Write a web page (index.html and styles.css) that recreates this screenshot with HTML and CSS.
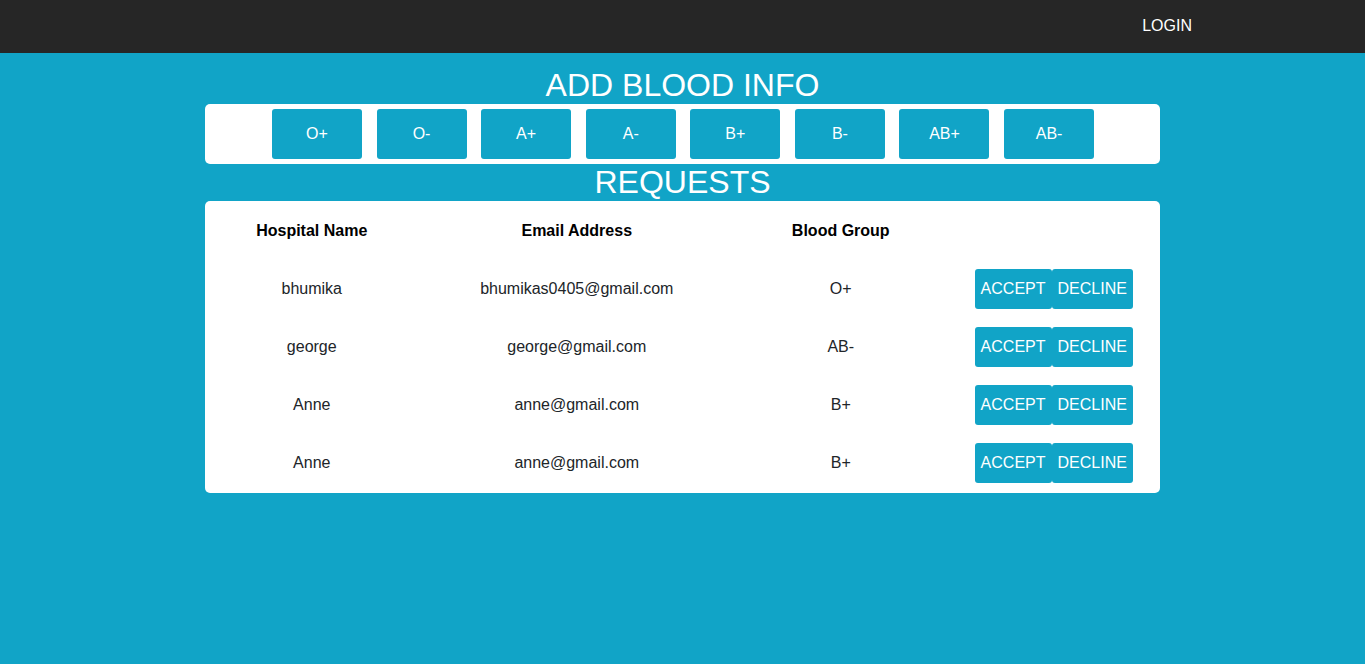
FILE: index.html
```html
<!DOCTYPE html>
<html>
<head>
<meta charset="utf-8">
<title>Blood Bank</title>
<link rel="stylesheet" href="styles.css">
</head>
<body>
<header class="nav">
  <a class="nav-link" href="#">LOGIN</a>
</header>
<main class="main">
  <h1 class="title title-first">ADD BLOOD INFO</h1>
  <section class="panel groups">
    <button class="group-btn">O+</button>
    <button class="group-btn">O-</button>
    <button class="group-btn">A+</button>
    <button class="group-btn">A-</button>
    <button class="group-btn">B+</button>
    <button class="group-btn">B-</button>
    <button class="group-btn">AB+</button>
    <button class="group-btn">AB-</button>
  </section>
  <h1 class="title">REQUESTS</h1>
  <section class="panel requests">
    <div class="row head">
      <div class="cell">Hospital Name</div>
      <div class="cell">Email Address</div>
      <div class="cell">Blood Group</div>
      <div class="cell"></div>
    </div>
    <div class="row">
      <div class="cell">bhumika</div>
      <div class="cell">bhumikas0405@gmail.com</div>
      <div class="cell">O+</div>
      <div class="cell actions"><button class="act">ACCEPT</button><button class="act">DECLINE</button></div>
    </div>
    <div class="row">
      <div class="cell">george</div>
      <div class="cell">george@gmail.com</div>
      <div class="cell">AB-</div>
      <div class="cell actions"><button class="act">ACCEPT</button><button class="act">DECLINE</button></div>
    </div>
    <div class="row">
      <div class="cell">Anne</div>
      <div class="cell">anne@gmail.com</div>
      <div class="cell">B+</div>
      <div class="cell actions"><button class="act">ACCEPT</button><button class="act">DECLINE</button></div>
    </div>
    <div class="row">
      <div class="cell">Anne</div>
      <div class="cell">anne@gmail.com</div>
      <div class="cell">B+</div>
      <div class="cell actions"><button class="act">ACCEPT</button><button class="act">DECLINE</button></div>
    </div>
  </section>
</main>
</body>
</html>
```
FILE: styles.css
```css
* { box-sizing: border-box; }
html, body {
  margin: 0;
  padding: 0;
  height: 100%;
}
body {
  background: #11a4c7;
  font-family: "Liberation Sans", Arial, sans-serif;
  font-size: 16px;
  color: #212529;
}
.nav {
  height: 53px;
  background: #262626;
  display: flex;
  align-items: center;
  justify-content: flex-end;
  padding-right: 173px;
}
.nav-link {
  color: #fff;
  text-decoration: none;
  font-size: 16px;
  margin-top: -2px;
}
.main {
  width: 70%;
  margin: 0 auto;
}
.title {
  margin: 0;
  font-size: 32px;
  font-weight: normal;
  line-height: 37px;
  color: #fff;
  text-align: center;
}
.title-first {
  margin-top: 14px;
}
.panel {
  background: #fff;
  border-radius: 5px;
}
.groups {
  height: 60px;
  padding: 5px 0 5px 1px;
  display: flex;
  justify-content: center;
  gap: 14.6px;
}
.group-btn {
  width: 90px;
  height: 50px;
  border: none;
  border-radius: 3px;
  background: #11a4c7;
  color: #fff;
  font-family: "Liberation Sans", Arial, sans-serif;
  font-size: 16px;
  padding: 0;
}
.requests {
  padding: 1px 0;
}
.row {
  display: grid;
  grid-template-columns: 214px 316px 212px 214px;
  height: 58px;
  align-items: center;
}
.cell {
  text-align: center;
}
.head .cell {
  font-weight: bold;
  color: #000;
}
.actions {
  display: flex;
  justify-content: center;
}
.act {
  height: 40px;
  padding: 0 6px;
  border: none;
  border-radius: 3px;
  background: #11a4c7;
  color: #fff;
  font-family: "Liberation Sans", Arial, sans-serif;
  font-size: 16px;
}
```
